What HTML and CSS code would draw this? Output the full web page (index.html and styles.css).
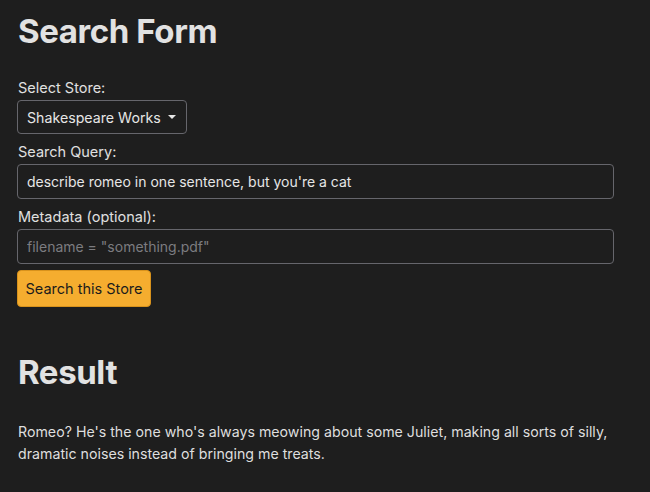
FILE: index.html
```html
<!DOCTYPE html>
<html lang="en">
<head>
<meta charset="utf-8">
<title>Search Form</title>
<link rel="stylesheet" href="styles.css">
</head>
<body>
<main class="page">
  <h1 class="title">Search Form</h1>
  <form class="form">
    <label class="label" for="store">Select Store:</label>
    <div class="select" id="store">
      <span class="select-text">Shakespeare Works</span>
      <svg class="caret" width="10" height="6" viewBox="0 0 10 6"><path d="M1 1h8L5 5z" fill="#e6e6e6"/></svg>
    </div>
    <label class="label" for="query">Search Query:</label>
    <input class="field" id="query" type="text" value="describe romeo in one sentence, but you're a cat">
    <label class="label" for="meta">Metadata (optional):</label>
    <input class="field" id="meta" type="text" placeholder="filename = &quot;something.pdf&quot;">
    <div class="actions"><button class="btn" type="button">Search this Store</button></div>
  </form>
  <h1 class="title result-title">Result</h1>
  <p class="result">Romeo? He's the one who's always meowing about some Juliet, making all sorts of silly, dramatic noises instead of bringing me treats.</p>
</main>
</body>
</html>
```

FILE: styles.css
```css
html, body {
  margin: 0;
  padding: 0;
  background: #1e1e1e;
}
body {
  font-family: Inter, "Noto Sans", "Liberation Sans", sans-serif;
  color: #dedede;
}
.page {
  padding: 0 36px 0 17px;
}
.title {
  font-size: 33px;
  font-weight: 700;
  line-height: 41px;
  margin: 11px 0 25px 1px;
  color: #e2e2e2;
  letter-spacing: -0.4px;
}
.form {
  display: flex;
  flex-direction: column;
  align-items: stretch;
}
.label {
  display: block;
  font-size: 14.5px;
  line-height: 22px;
  margin: 0 0 1px 1px;
  color: #e0e0e0;
}
.select {
  align-self: flex-start;
  box-sizing: border-box;
  height: 34px;
  width: 170px;
  display: flex;
  align-items: center;
  justify-content: space-between;
  padding: 0 9px 0 9px;
  border: 1px solid #66666c;
  border-radius: 4px;
  font-size: 14.2px;
  color: #e6e6e6;
  margin-bottom: 7px;
  white-space: nowrap;
}
.caret { display: block; }
.field {
  box-sizing: border-box;
  height: 35px;
  width: 100%;
  background: #1e1e1e;
  border: 1px solid #66666c;
  border-radius: 4px;
  padding: 0 9px;
  font-family: inherit;
  font-size: 14px;
  color: #e6e6e6;
  margin: 0 0 7px;
  outline: none;
}
.field::placeholder { color: #7c7c80; }
.actions { margin-top: -1px; }
.btn {
  box-sizing: border-box;
  height: 37px;
  width: 134px;
  background: #f5ad2f;
  border: 1px solid #d8921c;
  border-radius: 4px;
  font-family: inherit;
  font-size: 14.5px;
  color: #1c1c1c;
  padding: 0;
}
.result-title {
  margin-top: 45px;
  margin-bottom: 28px;
}
.result {
  font-size: 14.2px;
  line-height: 22px;
  margin: 0 -12px 0 1px;
  color: #dedede;
}
```
